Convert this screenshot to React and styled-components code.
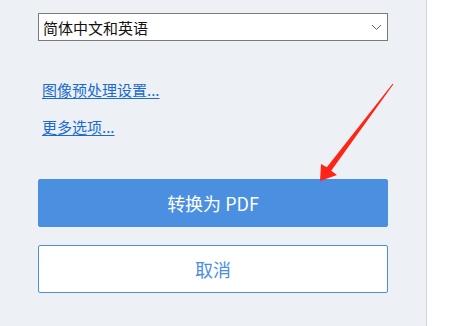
import styled, { createGlobalStyle } from 'styled-components';

const GlobalStyle = createGlobalStyle`
  html, body {
    margin: 0;
    padding: 0;
    background: #ffffff;
  }
  body {
    font-family: "Noto Sans CJK SC", "Noto Sans", sans-serif;
  }
`;

const Page = styled.div`
  position: relative;
  display: flex;
  width: 452px;
  height: 326px;
  overflow: hidden;
  background: #ffffff;
`;

const Panel = styled.div`
  display: flex;
  flex-direction: column;
  width: 388px;
  height: 326px;
  padding: 13px 0 0 38px;
  box-sizing: content-box;
  background: #edf1f5;
  border-right: 1px solid #cfd6df;
`;

const Select = styled.div`
  display: flex;
  align-items: center;
  justify-content: space-between;
  width: 350px;
  height: 28px;
  box-sizing: border-box;
  padding: 0 5px 0 4px;
  background: #ffffff;
  border: 1px solid #7a7a7a;
  font-size: 15px;
  color: #111111;
`;

const LinkText = styled.a`
  display: block;
  align-self: flex-start;
  margin-top: ${p => p.$gap}px;
  margin-left: 4px;
  font-size: 15px;
  line-height: 20px;
  color: #1a6bd0;
  text-decoration: underline;
  text-underline-offset: 2px;
  cursor: pointer;
`;

const Button = styled.button`
  width: 350px;
  height: 48px;
  margin-top: ${p => p.$gap}px;
  box-sizing: border-box;
  border-radius: 2px;
  font-family: "Noto Sans CJK SC", "Noto Sans", sans-serif;
  font-size: 18px;
  font-weight: 400;
  cursor: pointer;
  background: ${p => (p.$primary ? '#4a8fe0' : '#ffffff')};
  color: ${p => (p.$primary ? '#ffffff' : '#4a8fe0')};
  border: 1px solid #4a8fe0;
`;

const Overlay = styled.svg`
  position: absolute;
  left: 0;
  top: 0;
  pointer-events: none;
`;

const Chevron = () => (
  <svg width="11" height="7" viewBox="0 0 11 7">
    <path d="M1 1 L5.5 5.5 L10 1" fill="none" stroke="#666" strokeWidth="1" />
  </svg>
);

export default function App() {
  return (
    <>
      <GlobalStyle />
      <Page>
        <Panel>
          <Select>
            <span>简体中文和英语</span>
            <Chevron />
          </Select>
          <LinkText $gap={39}>图像预处理设置...</LinkText>
          <LinkText $gap={17}>更多选项...</LinkText>
          <Button $primary $gap={42}>转换为 PDF</Button>
          <Button $gap={18}>取消</Button>
        </Panel>
        <Overlay width="452" height="326">
          <polygon
            fill="#ff2415"
            points="393.4,84.3 392.6,83.7 326.8,167.3 321,164 320,181 337,175 331.2,170.7"
          />
        </Overlay>
      </Page>
    </>
  );
}
